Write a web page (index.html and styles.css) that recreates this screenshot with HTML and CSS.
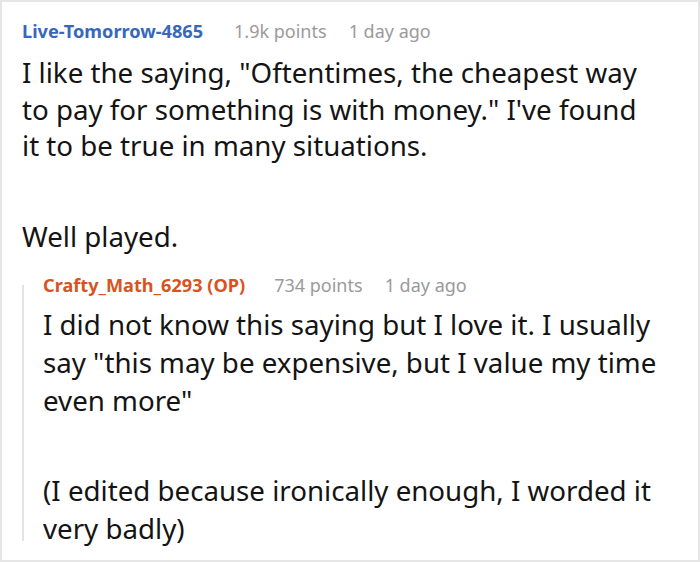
FILE: index.html
```html
<!DOCTYPE html>
<html>
<head>
<meta charset="utf-8">
<link rel="stylesheet" href="styles.css">
</head>
<body>
<div class="thread">
  <div class="comment">
    <div class="meta">
      <span class="user">Live-Tomorrow-4865</span>
      <span class="points">1.9k points</span>
      <span class="time">1 day ago</span>
    </div>
    <div class="body">
      <p>I like the saying, "Oftentimes, the cheapest way to pay for something is with money." I've found it to be true in many situations.</p>
      <p>Well played.</p>
    </div>
  </div>
  <div class="reply">
    <div class="meta">
      <span class="user op">Crafty_Math_6293 (OP)</span>
      <span class="points">734 points</span>
      <span class="time">1 day ago</span>
    </div>
    <div class="body">
      <p>I did not know this saying but I love it. I usually say "this may be expensive, but I value my time even more"</p>
      <p>(I edited because ironically enough, I worded it very badly)</p>
    </div>
  </div>
</div>
</body>
</html>
```

FILE: styles.css
```css
html, body {
  margin: 0;
  padding: 0;
  background: #ffffff;
}

.thread {
  width: 700px;
  height: 562px;
  box-sizing: border-box;
  border: 2px solid #e6e6e6;
  padding: 17px 18px 0 20px;
  font-family: "Noto Sans", "Open Sans", sans-serif;
  color: #141414;
  overflow: hidden;
}

.meta {
  display: flex;
  align-items: baseline;
  font-size: 18px;
  line-height: 24px;
  color: #9a9a9a;
}

.user {
  font-weight: 700;
  font-size: 18.15px;
  color: #3768bc;
  margin-right: 31px;
}

.user.op {
  color: #d9531f;
  margin-right: 29px;
}

.points {
  margin-right: 22px;
}

.body {
  font-size: 27.7px;
}

.body p {
  margin: 0;
}

.comment .body {
  margin-top: 11px;
  max-width: 625px;
  line-height: 36.5px;
}

.comment .body p + p {
  margin-top: 54.5px;
}

.reply {
  display: flow-root;
  margin-top: 30px;
  border-left: 2px solid #e3e3e3;
  padding-left: 19px;
}

.reply .meta {
  margin-top: -12px;
}

.reply .body {
  margin-top: 8px;
  margin-bottom: -6px;
  max-width: 625px;
  line-height: 38px;
}

.reply .body p + p {
  margin-top: 52px;
}
```
